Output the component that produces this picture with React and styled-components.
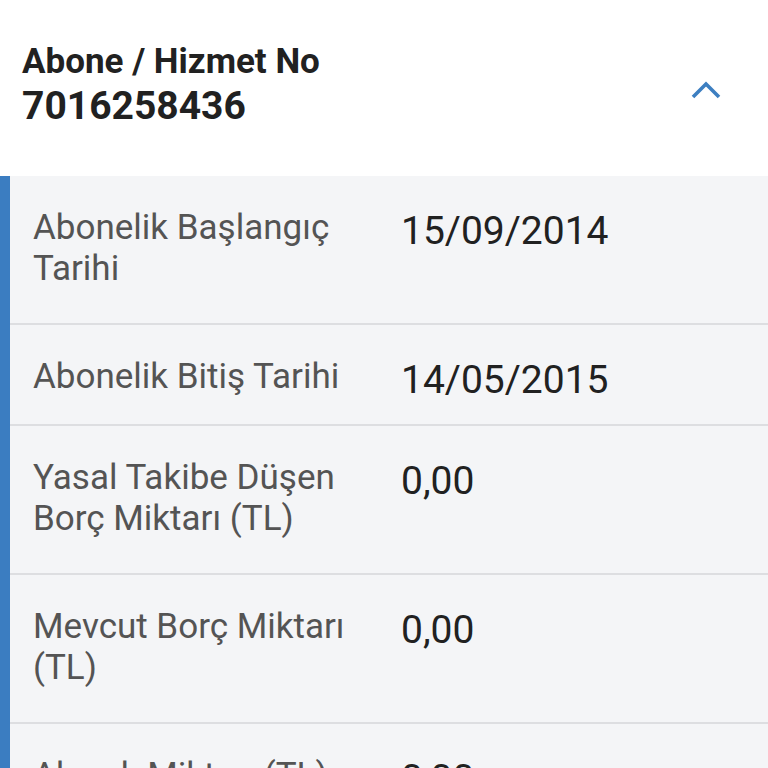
import React from "react";
import styled, { createGlobalStyle } from "styled-components";

const Global = createGlobalStyle`
  html, body { margin: 0; padding: 0; background: #ffffff; overflow: hidden; }
  body { font-family: Roboto, "Noto Sans", "Liberation Sans", sans-serif; -webkit-font-smoothing: antialiased; }
  * { box-sizing: border-box; }
`;

const Page = styled.div`
  width: 768px;
  height: 768px;
  overflow: hidden;
  display: flex;
  flex-direction: column;
`;

const Header = styled.div`
  height: 176px;
  flex: none;
  display: flex;
  align-items: flex-start;
  justify-content: space-between;
  padding: 40px 47px 0 22px;
  background: #ffffff;
`;

const TitleBlock = styled.div`
  display: flex;
  flex-direction: column;
`;

const Title = styled.div`
  font-size: 35px;
  line-height: 44px;
  font-weight: 700;
  color: #212121;
`;

const Number = styled.div`
  font-size: 39px;
  line-height: 44px;
  font-weight: 700;
  color: #212121;
`;

const Toggle = styled.button`
  align-self: center;
  margin-top: -37px;
  border: 0;
  padding: 0;
  background: transparent;
  width: 30px;
  height: 18px;
  display: flex;
  align-items: center;
  justify-content: center;
`;

const Panel = styled.div`
  flex: 1;
  background: #f4f5f7;
  border-left: 10px solid #3b7dc1;
  display: flex;
  flex-direction: column;
`;

const Row = styled.div`
  display: grid;
  grid-template-columns: 340px 1fr;
  column-gap: 28px;
  align-items: start;
  padding: ${(p) => (p.$compact ? "31px 0 22px 23px" : "31px 0 34px 23px")};
  border-bottom: 2px solid #dddee1;
  flex: none;
`;

const Label = styled.div`
  font-size: 35px;
  line-height: 41px;
  color: #545454;
`;

const Value = styled.div`
  font-size: 39px;
  line-height: 44px;
  color: #212121;
  padding-top: 2px;
`;

const rows = [
  { label: "Abonelik Başlangıç Tarihi", value: "15/09/2014" },
  { label: "Abonelik Bitiş Tarihi", value: "14/05/2015", compact: true },
  { label: "Yasal Takibe Düşen Borç Miktarı (TL)", value: "0,00" },
  { label: "Mevcut Borç Miktarı (TL)", value: "0,00" },
  { label: "Alacak Miktarı (TL)", value: "0,00", compact: true },
];

export default function App() {
  return (
    <Page>
      <Global />
      <Header>
        <TitleBlock>
          <Title>Abone / Hizmet No</Title>
          <Number>7016258436</Number>
        </TitleBlock>
        <Toggle aria-label="Daralt">
          <svg width="30" height="18" viewBox="0 0 30 18">
            <polyline
              points="2,16 15,3 28,16"
              fill="none"
              stroke="#3d7fc1"
              strokeWidth="3.6"
              strokeLinecap="butt"
              strokeLinejoin="miter"
            />
          </svg>
        </Toggle>
      </Header>
      <Panel>
        {rows.map((r) => (
          <Row key={r.label} $compact={r.compact}>
            <Label>{r.label}</Label>
            <Value>{r.value}</Value>
          </Row>
        ))}
      </Panel>
    </Page>
  );
}
